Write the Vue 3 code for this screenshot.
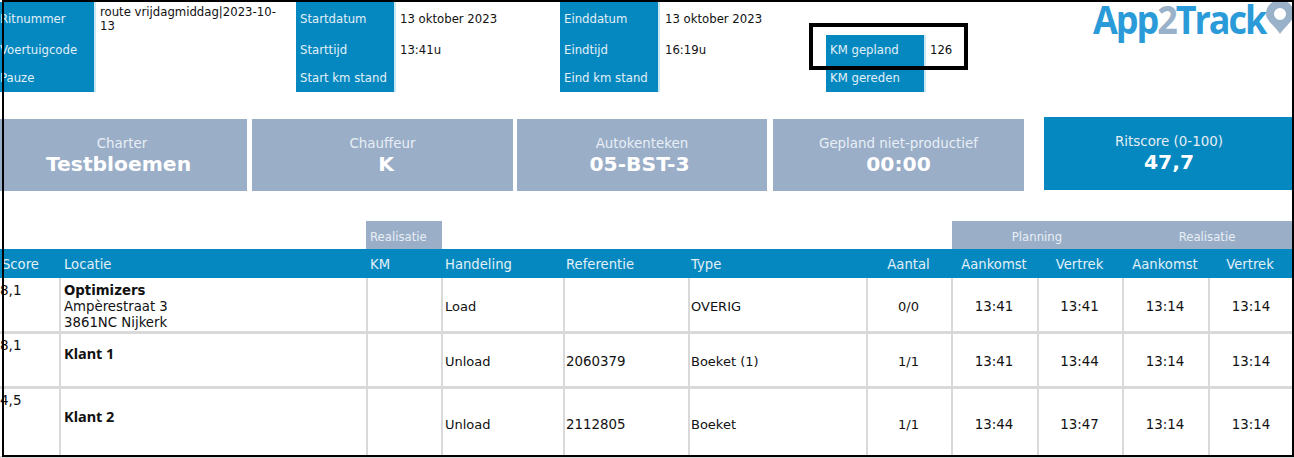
<script setup>
const headerGroups = [
  { cls: 'g1', rows: [['Ritnummer', 'route vrijdagmiddag|2023-10-13'], ['Voertuigcode', ''], ['Pauze', '']] },
  { cls: 'g2', rows: [['Startdatum', '13 oktober 2023'], ['Starttijd', '13:41u'], ['Start km stand', '']] },
  { cls: 'g3', rows: [['Einddatum', '13 oktober 2023'], ['Eindtijd', '16:19u'], ['Eind km stand', '']] },
]
const cards = [
  ['Charter', 'Testbloemen', 'c1'],
  ['Chauffeur', 'K', 'c2'],
  ['Autokenteken', '05-BST-3', 'c3'],
  ['Gepland niet-productief', '00:00', 'c4'],
]
const heads = [
  ['Score', ''], ['Locatie', ''], ['KM', ''], ['Handeling', ''], ['Referentie', ''], ['Type', ''],
  ['Aantal', 'ctr'], ['Aankomst', 'ctr'], ['Vertrek', 'ctr'], ['Aankomst', 'ctr'], ['Vertrek', 'ctr'],
]
const rows = [
  { score: '8,1', name: 'Optimizers', addr: ['Ampèrestraat 3', '3861NC Nijkerk'], act: 'Load', ref: '', type: 'OVERIG', n: '0/0', t: ['13:41', '13:41', '13:14', '13:14'], cls: 'r1' },
  { score: '8,1', name: 'Klant 1', addr: [], act: 'Unload', ref: '2060379', type: 'Boeket (1)', n: '1/1', t: ['13:41', '13:44', '13:14', '13:14'], cls: 'r2' },
  { score: '4,5', name: 'Klant 2', addr: [], act: 'Unload', ref: '2112805', type: 'Boeket', n: '1/1', t: ['13:44', '13:47', '13:14', '13:14'], cls: 'r3' },
]
</script>

<template>
  <div class="page">
    <header class="top">
      <div v-for="g in headerGroups" :key="g.cls" class="group" :class="g.cls">
        <template v-for="r in g.rows" :key="r[0]">
          <div class="lab">{{ r[0] }}</div>
          <div class="val">{{ r[1] }}</div>
        </template>
      </div>
      <div class="group g4">
        <div class="spacer"></div><div class="spacer"></div>
        <div class="lab">KM gepland</div><div class="val">126</div>
        <div class="lab">KM gereden</div><div class="val"></div>
      </div>
      <div class="logo">
        <span class="logo-text">App<span class="two">2</span>Track</span>
        <svg class="pin" width="30" height="32" viewBox="0 0 30 32">
          <path fill-rule="evenodd" fill="#9ab2c9" d="M15 32 C11 25 1 19 1 12 A14 14 0 0 1 29 12 C29 19 19 25 15 32 Z M15 6 A6 6 0 1 0 15 18 A6 6 0 1 0 15 6 Z" />
        </svg>
      </div>
    </header>

    <section class="cards">
      <div v-for="c in cards" :key="c[0]" class="card" :class="c[2]">
        <div class="card-t">{{ c[0] }}</div>
        <div class="card-v">{{ c[1] }}</div>
      </div>
      <div class="card score">
        <div class="card-t">Ritscore (0-100)</div>
        <div class="card-v">47,7</div>
      </div>
    </section>

    <section class="table">
      <div class="band">
        <div class="b-real">Realisatie</div>
        <div class="b-plan"><span>Planning</span><span>Realisatie</span></div>
      </div>
      <div class="grid thead">
        <div v-for="(h, i) in heads" :key="i" class="th" :class="h[1]">{{ h[0] }}</div>
      </div>
      <div v-for="r in rows" :key="r.name" class="grid row" :class="r.cls">
        <div class="td score-c">{{ r.score }}</div>
        <div class="td loc">
          <div class="name">{{ r.name }}</div>
          <div v-for="a in r.addr" :key="a">{{ a }}</div>
        </div>
        <div class="td"></div>
        <div class="td mid">{{ r.act }}</div>
        <div class="td mid num">{{ r.ref }}</div>
        <div class="td mid">{{ r.type }}</div>
        <div class="td mid ctr">{{ r.n }}</div>
        <div v-for="(t, i) in r.t" :key="i" class="td mid ctr num">{{ t }}</div>
      </div>
    </section>

    <div class="frame"></div>
    <div class="highlight"></div>
  </div>
</template>

<style scoped>
.page {
  position: relative;
  width: 1294px;
  height: 458px;
  overflow: hidden;
  background: #fff;
  color: #111;
  font-family: "DejaVu Sans", Verdana, sans-serif;
  font-size: 13px;
}
.top {
  display: flex;
  height: 92px;
  padding-top: 2px;
  font-size: 11.7px;
}
.group {
  display: grid;
  grid-template-rows: 33px 29px 28px;
  flex: none;
}
.g1 { width: 296px; grid-template-columns: 96px 1fr; }
.g2 { width: 264px; grid-template-columns: 100px 1fr; }
.g3 { width: 266px; grid-template-columns: 100px 1fr; }
.g4 { width: 219px; grid-template-columns: 100px 1fr; }
.lab {
  background: #0588c0;
  color: #e2f0f7;
  border-right: 2px solid #cbe7f3;
  display: flex;
  align-items: center;
  padding-left: 4px;
  box-sizing: border-box;
}
.g1 .lab { padding-left: 0; }
.val {
  padding: 0 12px 0 4px;
  display: flex;
  align-items: center;
  line-height: 14px;
}
.g3 .val { padding-left: 5px; }
.logo {
  flex: 1;
  position: relative;
  min-width: 0;
}
.logo-text {
  display: block;
  margin-left: 48px;
  margin-top: -2px;
  font-family: "Open Sans", sans-serif;
  font-weight: 700;
  font-size: 40px;
  line-height: 38px;
  color: #2a9bd8;
  letter-spacing: -2.3px;
  white-space: nowrap;
  transform: scaleX(0.9);
  transform-origin: left center;
}
.two { color: #9ab2c9; }
.pin {
  position: absolute;
  left: 220px;
  top: 0;
}

.cards {
  display: flex;
  margin-top: 25px;
  margin-left: -10px;
  align-items: flex-start;
}
.card {
  height: 72px;
  background: #9aaec8;
  color: #e8eef5;
  text-align: center;
  box-sizing: border-box;
  padding-top: 16px;
  flex: none;
}
.c1 { width: 257px; margin-right: 5px; }
.c2 { width: 261px; margin-right: 4px; }
.c3 { width: 250px; margin-right: 6px; }
.c4 { width: 251px; margin-right: 20px; }
.card.score {
  width: 250px;
  height: 73px;
  margin-top: -2px;
  background: #0588c0;
}
.card-t { font-size: 13.4px; line-height: 17px; }
.card-v {
  font-size: 20.3px;
  font-weight: 700;
  line-height: 24px;
  color: #fff;
}
.c1 .card-t { padding-left: 7px; }
.c2 .card-v { padding-left: 7px; }
.c3 .card-v { padding-right: 5px; }

.table { margin-top: 30px; }
.band {
  display: flex;
  height: 28px;
  color: #e8eef5;
  font-size: 11.7px;
}
.b-real {
  margin-left: 366px;
  width: 76px;
  background: #9aaec8;
  padding: 9px 0 0 4px;
  box-sizing: border-box;
}
.b-plan {
  margin-left: 510px;
  flex: 1;
  background: #9aaec8;
  display: flex;
  padding-top: 9px;
  box-sizing: border-box;
}
.b-plan span { width: 170px; text-align: center; }
.grid {
  display: grid;
  grid-template-columns: 61px 307px 75px 122px 125px 178px 85px 86px 85px 86px 84px;
}
.thead {
  height: 29px;
  background: #0588c0;
  color: #e2f0f7;
  font-size: 13.2px;
}
.th {
  display: flex;
  align-items: center;
  padding-left: 2px;
  box-sizing: border-box;
  padding-top: 2px;
}
.th:nth-child(2) { padding-left: 3px; }
.th:nth-child(5), .th:nth-child(6) { padding-left: 1px; }
.th.ctr { justify-content: center; padding-left: 0; padding-right: 4px; }
.row {
  border-bottom: 3px solid #d9d9d9;
  box-sizing: border-box;
}
.r1 { height: 56px; }
.r2 { height: 55px; }
.r3 { height: 70px; }
.td {
  border-right: 2px solid #d9d9d9;
  box-sizing: border-box;
  line-height: 16px;
  min-width: 0;
}
.td:last-child { border-right: 0; }
.score-c { padding: 3px 0 0 0; font-size: 13.5px; }
.r1 .score-c { padding-top: 4px; }
.loc { padding: 5px 0 0 3px; font-size: 13.3px; }
.name { font-weight: 700; }
.r2 .name, .r3 .name {
  font-family: "Noto Sans", sans-serif;
  font-size: 14.5px;
  line-height: 18px;
}
.r2 .loc { padding-top: 10px; }
.r3 .loc { padding-top: 18px; }
.mid { display: flex; align-items: center; padding-left: 2px; padding-top: 3px; }
.r1 .mid, .r3 .mid { padding-top: 4px; }
.td:nth-child(5), .td:nth-child(6) { padding-left: 1px; }
.num { font-size: 13.4px; }
.td.ctr { justify-content: center; padding-left: 0; padding-right: 2px; }

.frame {
  position: absolute;
  left: 2px;
  top: 0;
  right: 0;
  bottom: 1px;
  border: 2px solid #000;
  pointer-events: none;
}
.highlight {
  position: absolute;
  left: 809px;
  top: 23px;
  width: 159px;
  height: 47px;
  box-sizing: border-box;
  border: 4px solid #000;
}
</style>
